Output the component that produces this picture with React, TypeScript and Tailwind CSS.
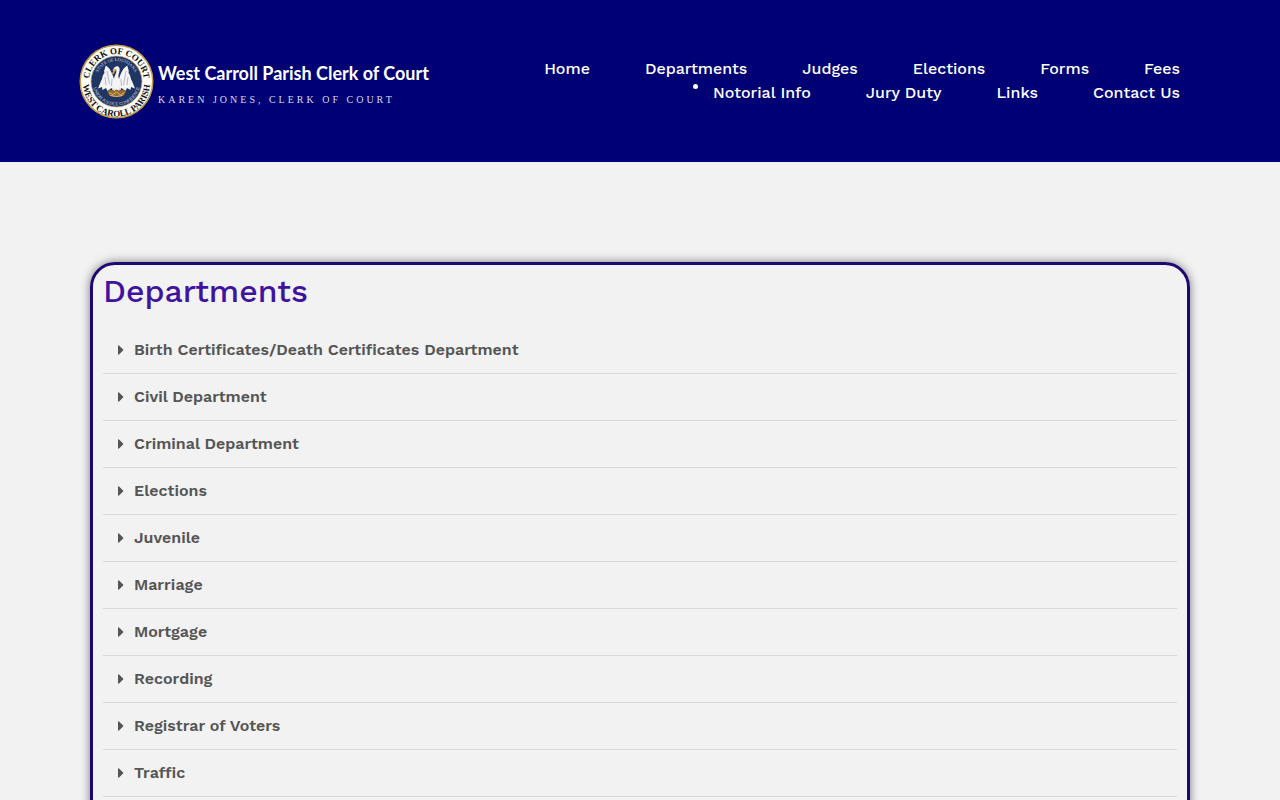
import { FaCaretRight } from "react-icons/fa"

const navLinks = ["Home", "Departments", "Judges", "Elections", "Forms", "Fees", "Notorial Info", "Jury Duty", "Links", "Contact Us"]

const departments = [
  "Birth Certificates/Death Certificates Department",
  "Civil Department",
  "Criminal Department",
  "Elections",
  "Juvenile",
  "Marriage",
  "Mortgage",
  "Recording",
  "Registrar of Voters",
  "Traffic",
]

const Seal = () => {
  return (
    <svg viewBox="0 0 150 150" className="w-[75px] h-[75px] shrink-0" aria-hidden="true">
      <defs>
        <path id="ring-top" d="M 20 75 A 55 55 0 0 1 130 75" />
        <path id="ring-bottom" d="M 10 62 A 67 67 0 1 0 140 62" />
        <path id="inner-top" d="M 34 75 A 41 41 0 0 1 116 75" />
        <path id="inner-bottom" d="M 27 75 A 48 48 0 0 0 123 75" />
      </defs>
      <circle cx="75" cy="75" r="72.5" fill="#fffdf6" stroke="#c39a4a" strokeWidth="3" />
      <circle cx="75" cy="75" r="51" fill="#1f3563" stroke="#b9ab86" strokeWidth="1.5" />
      <g fontFamily="Liberation Serif, serif" fontWeight="700" fontSize="18" fill="#111111" textAnchor="middle">
        <text><textPath href="#ring-top" startOffset="50%">CLERK OF COURT</textPath></text>
        <text><textPath href="#ring-bottom" startOffset="50%">WEST CAROLL PARISH</textPath></text>
      </g>
      <g fontFamily="Liberation Serif, serif" fontSize="9" fill="#d5d9e2" textAnchor="middle">
        <text><textPath href="#inner-top" startOffset="50%">STATE OF LOUISIANA</textPath></text>
        <text><textPath href="#inner-bottom" startOffset="50%">UNION JUSTICE CONFIDENCE</textPath></text>
      </g>
      {/* pelican */}
      <path d="M70 70 C67 60 62 47 53 43 C53 49 49 52 51 58 C46 63 48 68 44 74 L38 89 L46 86 L47 92 L54 88 L57 94 L65 88 L75 99 L85 88 L93 94 L96 88 L103 92 L104 86 L112 89 L106 74 C102 68 104 63 99 58 C101 52 97 49 97 43 C88 47 83 60 80 70 C77 64 80 59 81 54 C83 46 77 42 72 46 C69 48 69 51 67 54 L74 52 C77 56 71 62 70 70 Z" fill="#f4f4f4" />
      <path d="M56 54 L61 80 M52 66 L54 82 M94 54 L89 82 M98 66 L96 82 M66 70 L65 84 M84 70 L85 84" fill="none" stroke="#98a1b5" strokeWidth="1.5" />
      <path d="M72 49 L65 60 L69 60 L75 51 Z" fill="#d49a42" />
      <path d="M57 94 Q64 90 69 94 Q75 88 81 94 Q87 90 94 94 L90 103 Q75 109 60 103 Z" fill="#94682f" />
      <path d="M60 97 L68 101 L75 96 L83 102 L91 97 M63 103 Q75 107 87 103" fill="none" stroke="#e0b56d" strokeWidth="2" />
      <path d="M66 92 L69 86 L72 94 Z M78 93 L82 86 L84 92 Z" fill="#e9dcc4" />
    </svg>
  )
}

const Header = () => {
  return (
    <header className="bg-[#000075] text-white min-h-[162px] flex items-center justify-between gap-6 pl-[79px] pr-[100px]">
      <a href="#" className="flex items-center gap-1 shrink-0">
        <Seal />
        <span className="flex flex-col">
          <span className="font-['Lato',sans-serif] font-bold text-[18px] leading-[38px] whitespace-nowrap">West Carroll Parish Clerk of Court</span>
          <span className="font-['Liberation_Serif',serif] text-[10px] leading-4 tracking-[3px] whitespace-nowrap text-[#d9d9f2]">KAREN JONES, CLERK OF COURT</span>
        </span>
      </a>

      <nav className="max-w-[660px]">
        <ul className="flex flex-wrap justify-end gap-x-[55px] text-[16px] leading-6 font-medium">
          {navLinks.map((link) => (
            <li key={link} className="relative">
              {link === "Notorial Info" && <span className="absolute -left-5 top-[3px] w-[5px] h-[5px] rounded-full bg-white" />}
              <a href="#">{link}</a>
            </li>
          ))}
        </ul>
      </nav>
    </header>
  )
}

const App = () => {
  return (
    <div className="min-h-screen bg-[#f2f2f2] font-['Work_Sans','Inter',sans-serif]">
      <Header />
      <main className="px-[90px] pt-[100px] pb-20">
        <section className="border-[3px] border-[#1f0773] rounded-[25px] p-[10px] pb-10 shadow-[0_0_10px_rgba(0,0,0,0.5)]">
          <h1 className="text-[32px] leading-8 font-medium text-[#3f139f] mb-5">Departments</h1>
          <ul>
            {departments.map((name) => (
              <li key={name} className="border-b border-[#d5d8dc]">
                <button type="button" aria-expanded="false" className="w-full flex items-center gap-[10px] p-[15px] text-left text-[16px] leading-4 font-semibold text-[#555555]">
                  <FaCaretRight className="w-[6px] h-4 shrink-0" />
                  {name}
                </button>
              </li>
            ))}
          </ul>
        </section>
      </main>
    </div>
  )
}

export default App
